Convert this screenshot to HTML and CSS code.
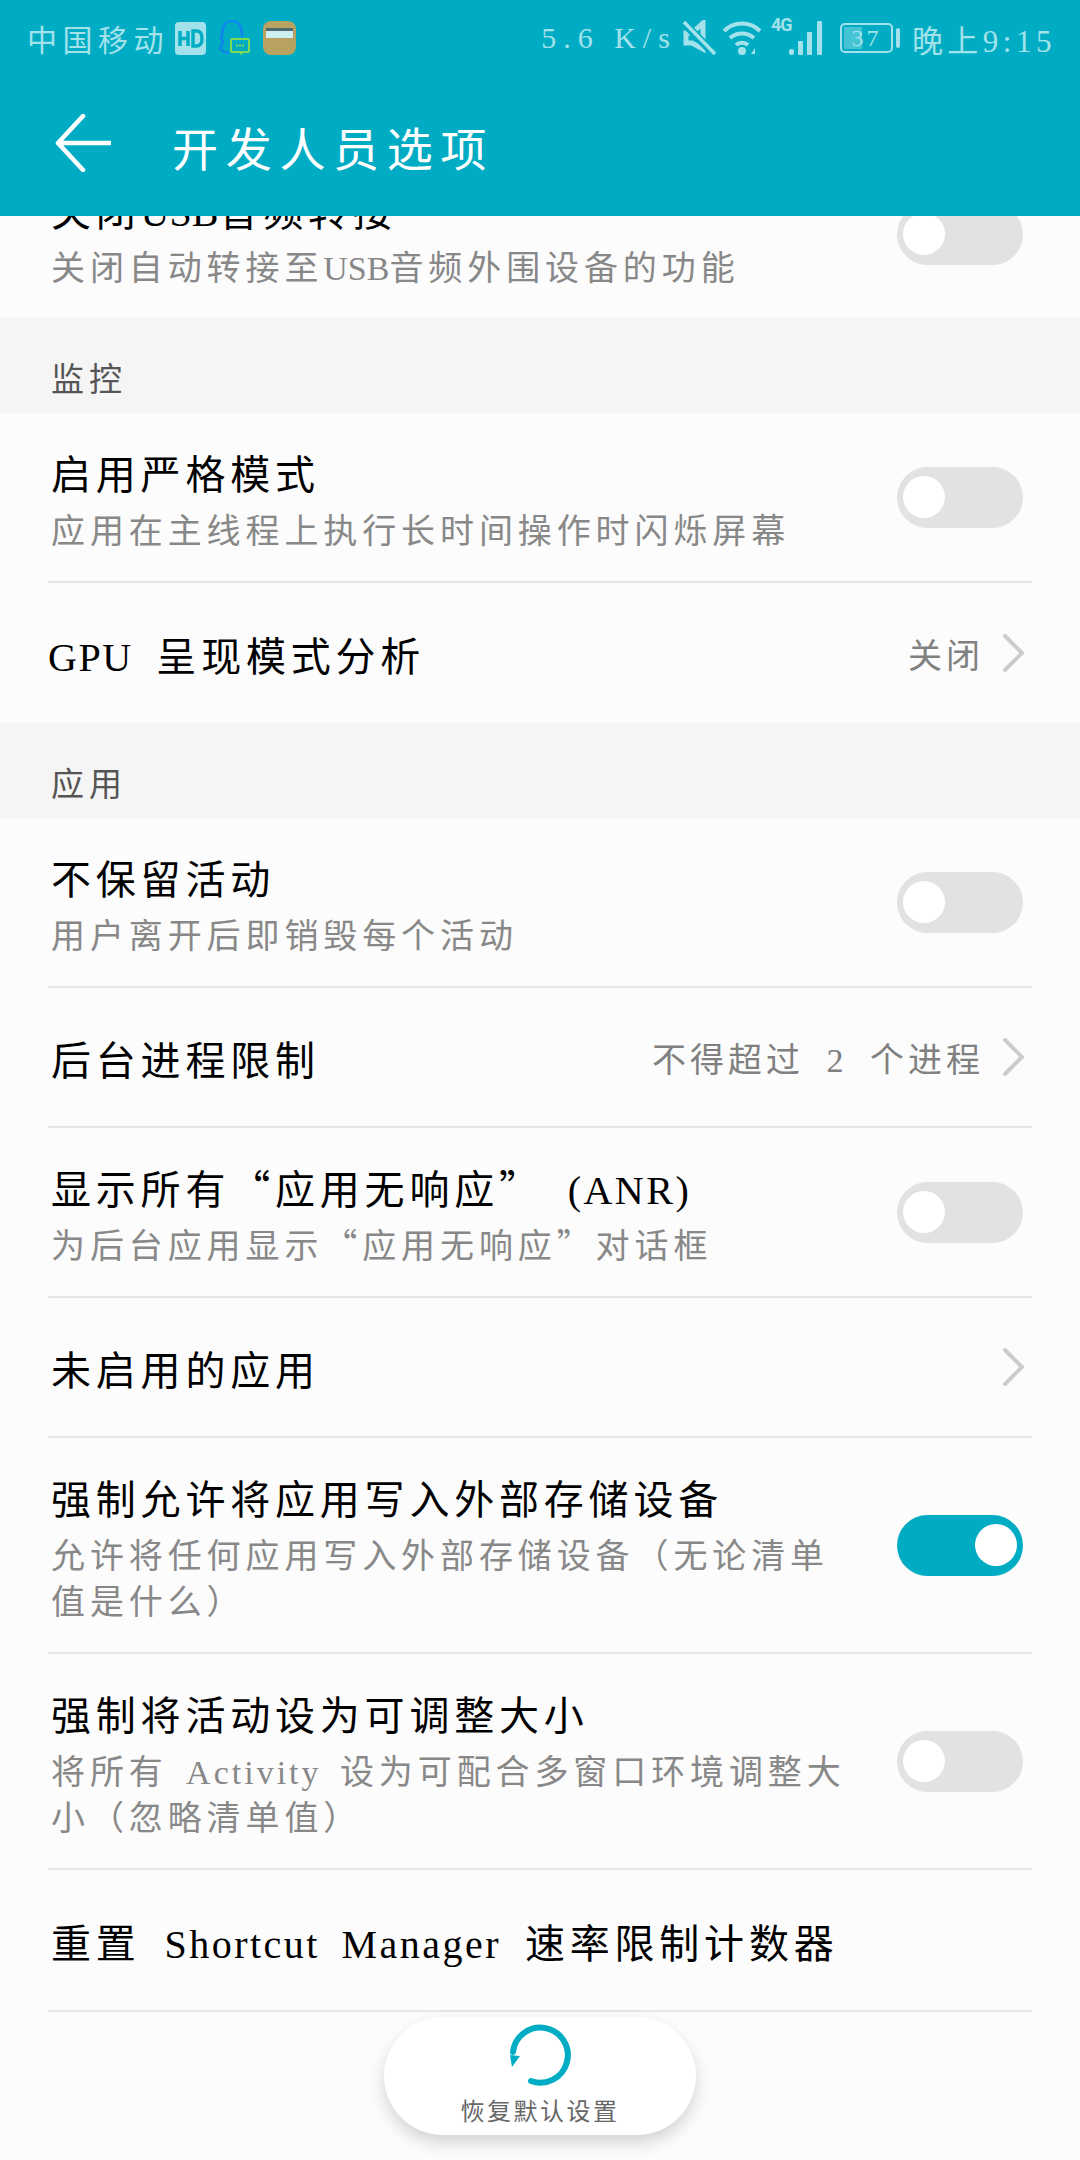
FILE: index.html
```html
<!DOCTYPE html>
<html lang="zh-CN">
<head>
  <meta charset="UTF-8" />
  <title>开发人员选项</title>
  <link rel="stylesheet" href="styles.css">
</head>
<body>
  <div class="screen">
    <header class="appbar">
      <div class="status">
        <div class="status-left">
          <span class="carrier">中国移动</span>
          <svg class="ic-hd" width="31" height="33" viewBox="0 0 31 33"><rect width="31" height="33" rx="4" fill="#a3e2ea"/><path d="M5 9v15M13 9v15M5 16.500h8" stroke="#00acc4" stroke-width="3.500" fill="none"/><path d="M18 9v15h3c5 0 6-3 6-7.500S26 9 21 9z" stroke="#00acc4" stroke-width="3.500" fill="none"/></svg>
          <svg class="ic-qq" width="33" height="36" viewBox="0 0 33 36"><path d="M11 33c-5-1-8-2-9-5 0-2 3-3 3-7-3-2-2-4-1-5 0-9 3-15 10-15s10 6 10 16" stroke="#0f86ea" stroke-width="2.500" fill="none"/><rect x="13" y="19" width="18" height="13" rx="1" fill="#00acc4" stroke="#7ed957" stroke-width="2"/><path d="M20 32l3 3 3-3" fill="#7ed957"/><path d="M18 25.500h2M21 25.500h2M24 25.500h2" stroke="#7ed957" stroke-width="2"/></svg>
          <svg class="ic-wallet" width="33" height="34" viewBox="0 0 33 34"><rect width="33" height="34" rx="8" fill="#b7a35f"/><rect x="3" y="7" width="27" height="10" fill="#cdeef2"/><rect x="3" y="7" width="27" height="3" fill="#4e6a6e"/></svg>
        </div>
        <div class="status-right">
          <span class="speed">5.6 K/s</span>
          <svg class="ic-mute" width="33" height="36" viewBox="0 0 33 36"><path d="M3 13h6l11-10v26L9 23H3z" fill="none" stroke="#a3e2ea" stroke-width="5"/><path d="M1 3l30 31" stroke="#00acc4" stroke-width="8"/><path d="M1 2l31 32" stroke="#a3e2ea" stroke-width="3.500"/></svg>
          <svg class="ic-wifi" width="40" height="36" viewBox="0 0 40 36"><path d="M2 11c10-10 26-10 36 0M8 18c7-6 17-6 24 0M14 25c3-3 9-3 12 0" fill="none" stroke="#a3e2ea" stroke-width="4"/><circle cx="20" cy="31" r="4" fill="#a3e2ea"/><path d="M29 34l4-6v6z" fill="#a3e2ea"/></svg>
          <span class="net-type">4G</span>
          <svg class="ic-signal" width="36" height="36" viewBox="0 0 36 36"><g fill="#a3e2ea"><rect x="0" y="29" width="5" height="6" rx="2"/><rect x="9" y="21" width="5" height="14" rx="1"/><rect x="18" y="12" width="5" height="23" rx="1"/><rect x="28" y="1" width="5" height="34" rx="1"/></g></svg>
          <div class="battery"><div class="battery-fill"></div><span class="battery-num">37</span></div>
          <div class="battery-nub"></div>
          <span class="clock">晚上9:15</span>
        </div>
      </div>
      <div class="titlebar">
        <svg class="back" width="56" height="58" viewBox="0 0 56 58"><path d="M28 2L3 29l25 27M3 29h52" fill="none" stroke="#fff" stroke-width="4.500" stroke-linecap="round" stroke-linejoin="round"/></svg>
        <h1 class="page-title">开发人员选项</h1>
      </div>
    </header>

    <main class="content">
      <div class="list">
        <div class="row row-last">
          <div class="row-text">
            <div class="row-title">关闭<span class="tight">USB</span>音频转接</div>
            <div class="row-sub">关闭自动转接至<span class="tight">USB</span>音频外围设备的功能</div>
          </div>
          <div class="toggle"></div>
        </div>

        <div class="section">监控</div>
        <div class="row">
          <div class="row-text">
            <div class="row-title">启用严格模式</div>
            <div class="row-sub">应用在主线程上执行长时间操作时闪烁屏幕</div>
          </div>
          <div class="toggle"></div>
        </div>
        <div class="row row-single row-last">
          <div class="row-title flush"><span class="latin">GPU</span> 呈现模式分析</div>
          <div class="row-value">关闭<svg class="chevron" width="21" height="38" viewBox="0 0 21 38"><path d="M2 2l17 17L2 36" fill="none" stroke="#ccc" stroke-width="4" stroke-linecap="round"/></svg></div>
        </div>

        <div class="section">应用</div>
        <div class="row">
          <div class="row-text">
            <div class="row-title">不保留活动</div>
            <div class="row-sub">用户离开后即销毁每个活动</div>
          </div>
          <div class="toggle"></div>
        </div>
        <div class="row row-single">
          <div class="row-title">后台进程限制</div>
          <div class="row-value">不得超过 2 个进程<svg class="chevron" width="21" height="38" viewBox="0 0 21 38"><path d="M2 2l17 17L2 36" fill="none" stroke="#ccc" stroke-width="4" stroke-linecap="round"/></svg></div>
        </div>
        <div class="row">
          <div class="row-text">
            <div class="row-title"><span class="cjk">显示所有“应用无响应”</span> <span class="latin">(ANR)</span></div>
            <div class="row-sub"><span class="cjk">为后台应用显示“应用无响应”对话框</span></div>
          </div>
          <div class="toggle"></div>
        </div>
        <div class="row row-single">
          <div class="row-title">未启用的应用</div>
          <div class="row-value"><svg class="chevron" width="21" height="38" viewBox="0 0 21 38"><path d="M2 2l17 17L2 36" fill="none" stroke="#ccc" stroke-width="4" stroke-linecap="round"/></svg></div>
        </div>
        <div class="row">
          <div class="row-text">
            <div class="row-title">强制允许将应用写入外部存储设备</div>
            <div class="row-sub">允许将任何应用写入外部存储设备（无论清单<br>值是什么）</div>
          </div>
          <div class="toggle on"></div>
        </div>
        <div class="row">
          <div class="row-text">
            <div class="row-title">强制将活动设为可调整大小</div>
            <div class="row-sub">将所有 <span class="latin-sub">Activity</span> 设为可配合多窗口环境调整大<br>小（忽略清单值）</div>
          </div>
          <div class="toggle"></div>
        </div>
        <div class="row row-single row-reset">
          <div class="row-title">重置 <span class="latin">Shortcut Manager</span> 速率限制计数器</div>
        </div>
      </div>

      <button class="restore">
        <svg class="restore-icon" width="64" height="64" viewBox="0 0 64 64"><path d="M23 58A27.500 27.500 0 1 0 5 29" fill="none" stroke="#00acc4" stroke-width="6" stroke-linecap="round"/><path d="M2 32l10 1-8 11z" fill="#00acc4"/></svg>
        <span class="restore-label">恢复默认设置</span>
      </button>
    </main>
  </div>
</body>
</html>
```

FILE: styles.css
```css
* {
  box-sizing: border-box;
}

body {
  margin: 0;
  background-color: #fcfcfc;
  font-family: "Liberation Serif", "Noto Sans CJK SC", serif;
}

.screen {
  width: 1080px;
  height: 2160px;
  display: flex;
  flex-direction: column;
  overflow: hidden;
}

/* top bar */
.appbar {
  height: 216px;
  flex-shrink: 0;
  background-color: #00acc4;
  position: relative;
  z-index: 2;
}

.status {
  height: 76px;
  padding: 0 24px 0 27px;
  display: flex;
  justify-content: space-between;
  align-items: center;
  color: #a3e2ea;
}

.status-left,
.status-right {
  display: flex;
  align-items: center;
}

.carrier {
  font-size: 30px;
  letter-spacing: 5.500px;
  margin-right: 6px;
}

.ic-qq {
  margin: 0 12px;
}

.speed {
  font-size: 30px;
  letter-spacing: 7px;
  margin-right: 6px;
}

.ic-wifi {
  margin-left: 6px;
}

.net-type {
  font-family: "Roboto", sans-serif;
  font-weight: 700;
  font-size: 18px;
  line-height: 18px;
  letter-spacing: -1px;
  width: 18px;
  margin-left: 9px;
  align-self: flex-start;
}

.battery {
  width: 53px;
  height: 30px;
  margin-left: 15px;
  border: 2px solid #a3e2ea;
  border-radius: 5px;
  position: relative;
  display: flex;
  justify-content: center;
  align-items: center;
}

.battery-fill {
  position: absolute;
  left: 2px;
  top: 2px;
  bottom: 2px;
  width: 18px;
  background-color: #45c4d6;
}

.battery-num {
  position: relative;
  font-size: 24px;
  letter-spacing: 3px;
  line-height: 26px;
}

.battery-nub {
  width: 4px;
  height: 20px;
  margin-left: 3px;
  background-color: #a3e2ea;
  border-radius: 2px;
}

.clock {
  font-size: 31px;
  letter-spacing: 4.500px;
  margin-left: 12px;
}

.titlebar {
  height: 140px;
  padding-left: 55px;
  display: flex;
  align-items: center;
}

.back {
  margin-top: -6px;
}

.page-title {
  margin: 0 0 0 61px;
  font-size: 46px;
  font-weight: 400;
  letter-spacing: 7.700px;
  color: #fff;
}

/* list */
.content {
  flex: 1;
  min-height: 0;
  position: relative;
}

.list {
  margin-top: -66px;
}

.section {
  height: 95px;
  padding: 39px 0 0 51px;
  background-color: #f5f5f5;
  color: #555;
  font-size: 33px;
  letter-spacing: 5px;
  line-height: 46px;
}

.row {
  margin: 0 48px;
  padding: 26px 9px 26px 3px;
  border-bottom: 2px solid #e6e6e6;
  display: flex;
  justify-content: space-between;
  align-items: center;
}

.row-text {
  padding-top: 12px;
}

.row-single {
  height: 140px;
  padding-top: 0;
  padding-bottom: 0;
}

.row-reset {
  height: 142px;
}

.row-last {
  border-bottom: none;
}

.row-title {
  color: #000;
  font-size: 40px;
  letter-spacing: 4.800px;
  word-spacing: 9px;
  line-height: 50px;
}

.row-single .row-title {
  padding-top: 10px;
}

.flush {
  margin-left: -3px;
}

.row-sub {
  margin-top: 8px;
  color: #888;
  font-size: 34px;
  letter-spacing: 4.900px;
  word-spacing: 5px;
  line-height: 46px;
}

.tight {
  letter-spacing: 0;
}

.latin {
  letter-spacing: 2.500px;
}

.flush .latin {
  letter-spacing: 1.500px;
}

.latin-sub {
  letter-spacing: 3px;
}

/* keeps the quote marks full width */
.cjk {
  font-family: "Noto Sans CJK SC", sans-serif;
  line-height: 1;
}

.row-value {
  display: flex;
  align-items: center;
  color: #808080;
  font-size: 34px;
  letter-spacing: 4px;
  word-spacing: 10px;
}

.chevron {
  margin-left: 19px;
  margin-right: -1px;
}

.toggle {
  width: 126px;
  height: 61px;
  flex-shrink: 0;
  padding: 0 6px;
  border-radius: 31px;
  background-color: #e2e2e2;
  display: flex;
  align-items: center;
}

.toggle::after {
  content: "";
  width: 42px;
  height: 42px;
  border-radius: 50%;
  background-color: #fff;
}

.toggle.on {
  justify-content: flex-end;
  background-color: #00acc4;
}

/* floating button */
.restore {
  position: absolute;
  left: 384px;
  bottom: 25px;
  width: 312px;
  height: 118px;
  padding: 6px 0 0;
  border: none;
  border-radius: 59px;
  background-color: #fff;
  box-shadow: 0 8px 16px rgba(0, 0, 0, 0.16);
  display: flex;
  flex-direction: column;
  align-items: center;
  font-family: inherit;
}

.restore-label {
  margin-top: 10px;
  color: #666;
  font-size: 24px;
  letter-spacing: 2.500px;
  line-height: 30px;
}
```
